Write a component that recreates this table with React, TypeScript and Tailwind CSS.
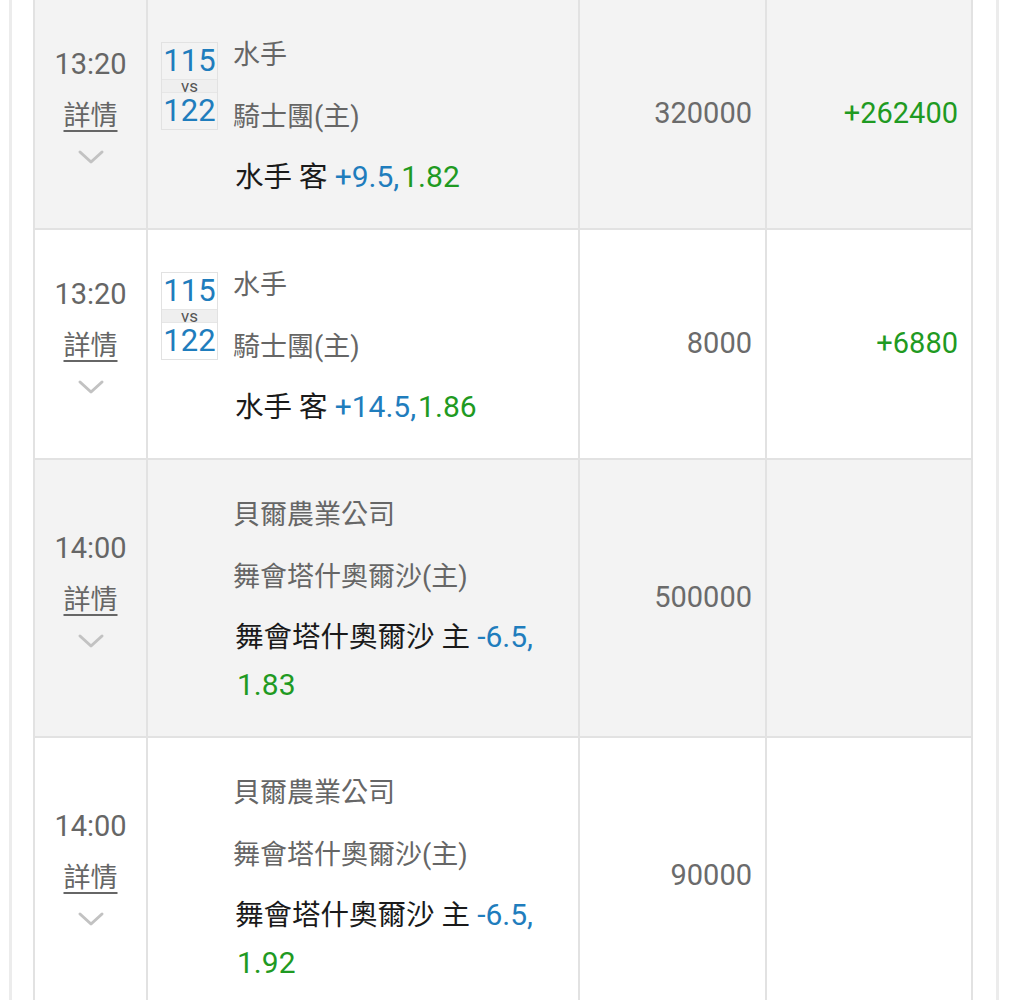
import React from "react";

type Row = {
  time: string;
  score?: [string, string];
  away: string;
  home: string;
  betTeam: string;
  betSide: string;
  line: string;
  odds: string;
  amount: string;
  result?: string;
  shaded: boolean;
};

const rows: Row[] = [
  { time: "13:20", score: ["115", "122"], away: "水手", home: "騎士團(主)", betTeam: "水手", betSide: "客", line: "+9.5,", odds: "1.82", amount: "320000", result: "+262400", shaded: true },
  { time: "13:20", score: ["115", "122"], away: "水手", home: "騎士團(主)", betTeam: "水手", betSide: "客", line: "+14.5,", odds: "1.86", amount: "8000", result: "+6880", shaded: false },
  { time: "14:00", away: "貝爾農業公司", home: "舞會塔什奧爾沙(主)", betTeam: "舞會塔什奧爾沙", betSide: "主", line: "-6.5,", odds: "1.83", amount: "500000", shaded: true },
  { time: "14:00", away: "貝爾農業公司", home: "舞會塔什奧爾沙(主)", betTeam: "舞會塔什奧爾沙", betSide: "主", line: "-6.5,", odds: "1.92", amount: "90000", shaded: false },
];

const font = { fontFamily: "Roboto, 'Noto Sans CJK TC', 'Noto Sans', sans-serif" };

function Chevron() {
  return (
    <svg width="28" height="16" viewBox="0 0 28 16" fill="none">
      <path d="M3 3 L14 13 L25 3" stroke="#c2c2c2" strokeWidth="3" strokeLinecap="round" strokeLinejoin="round" />
    </svg>
  );
}

function ScoreBox({ a, b }: { a: string; b: string }) {
  return (
    <div className="flex w-[57px] flex-col border border-[#e2e2e2]">
      <div className="flex h-[36px] items-center justify-center text-[31px] leading-[28px] text-[#1f7dbd]">{a}</div>
      <div className="flex h-[14px] items-center justify-center border-y border-[#e6e6e6] bg-[#efefef] text-[17px] leading-[12px] text-[#555]">vs</div>
      <div className="flex h-[36px] items-center justify-center text-[31px] leading-[28px] text-[#1f7dbd]">{b}</div>
    </div>
  );
}

function TableRow({ r }: { r: Row }) {
  const bg = r.shaded ? "bg-[#f3f3f3]" : "bg-white";
  return (
    <div className={`flex border-b-2 border-[#e2e2e2] ${bg}`}>
      <div className="flex w-[113px] shrink-0 flex-col items-center justify-center border-r-2 border-[#e2e2e2] pb-[15px]">
        <div className="flex h-[40px] items-center text-[29px] text-[#666]">{r.time}</div>
        <div className="mt-[12px] flex h-[40px] items-center text-[27px] text-[#666] underline decoration-[2px] underline-offset-[5px]">詳情</div>
        <div className="mt-[8px] flex h-[24px] items-center">
          <Chevron />
        </div>
      </div>
      <div className="grid w-[432px] shrink-0 grid-cols-[72px_1fr] border-r-2 border-[#e2e2e2] pb-[26px] pl-[13px] pr-[12px] pt-[24px]">
        <div className="flex items-center">{r.score && <ScoreBox a={r.score[0]} b={r.score[1]} />}</div>
        <div className="flex flex-col">
          <div className="flex h-[62px] items-center text-[27px] text-[#666]">{r.away}</div>
          <div className="flex h-[62px] items-center text-[27px] text-[#666]">{r.home}</div>
        </div>
        <div />
        <div className="mt-[6px] pl-[2px] text-[28.5px] leading-[48px] text-[#1a1a1a]">
          <span className="leading-none">{r.betTeam} {r.betSide}</span>{" "}
          <span className="text-[30px] leading-none text-[#1f7dbd]">{r.line}</span>
          <wbr />
          <span className="ml-[2px] text-[30px] leading-none text-[#1f9a22]">{r.odds}</span>
        </div>
      </div>
      <div className="flex w-[187px] shrink-0 items-center justify-end border-r-2 border-[#e2e2e2] pr-[13px] text-[29px] text-[#6b6b6b]">
        {r.amount}
      </div>
      <div className="flex w-[206px] shrink-0 items-center justify-end border-r-2 border-[#e2e2e2] pr-[13px] text-[29px] text-[#1f9a22]">
        {r.result ?? ""}
      </div>
    </div>
  );
}

export default function App() {
  return (
    <div className="min-h-[1000px] w-[1033px] bg-white" style={font}>
      <div className="ml-[9px] min-h-[1000px] w-[990px] border-x-[3px] border-[#ececec] pl-[21px]">
        <div className="w-[940px] border-l-2 border-[#e2e2e2]">
          {rows.map((r, i) => (
            <TableRow key={i} r={r} />
          ))}
        </div>
      </div>
    </div>
  );
}
